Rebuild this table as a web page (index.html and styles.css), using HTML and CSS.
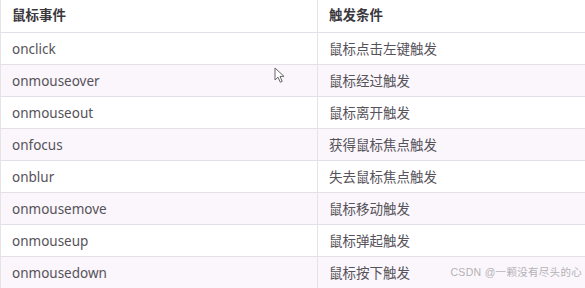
FILE: index.html
```html
<!DOCTYPE html>
<html lang="zh">
<head>
<meta charset="utf-8">
<link rel="stylesheet" href="styles.css">
</head>
<body>
<div class="page">
  <table class="events">
    <thead>
      <tr><th>鼠标事件</th><th>触发条件</th></tr>
    </thead>
    <tbody>
      <tr><td>onclick</td><td>鼠标点击左键触发</td></tr>
      <tr><td>onmouseover</td><td>鼠标经过触发</td></tr>
      <tr><td>onmouseout</td><td>鼠标离开触发</td></tr>
      <tr><td>onfocus</td><td>获得鼠标焦点触发</td></tr>
      <tr><td>onblur</td><td>失去鼠标焦点触发</td></tr>
      <tr><td>onmousemove</td><td>鼠标移动触发</td></tr>
      <tr><td>onmouseup</td><td>鼠标弹起触发</td></tr>
      <tr><td>onmousedown</td><td>鼠标按下触发</td></tr>
    </tbody>
  </table>
  <svg class="cursor" width="12" height="17" viewBox="0 0 12 17">
    <path d="M1 1 L1 13 L4 10.2 L6.3 15.2 L8.2 14.3 L6 9.4 L10 9.4 Z" fill="#fff" stroke="#666" stroke-width="1" stroke-linejoin="round"/>
  </svg>
  <div class="watermark">CSDN @一颗没有尽头的心</div>
</div>
</body>
</html>
```
FILE: styles.css
```css
html, body {
  margin: 0;
  padding: 0;
  background: #fff;
}
.page {
  position: relative;
  width: 585px;
  height: 288px;
  overflow: hidden;
}
.events {
  border-collapse: collapse;
  width: 620px;
  table-layout: fixed;
  font-family: "Noto Sans", "Noto Sans CJK SC", sans-serif;
  font-size: 13.5px;
  color: #56525a;
  border-left: 1px solid #e6e2ea;
}
.events th,
.events td {
  padding: 0 0 0 11px;
  text-align: left;
  border-bottom: 1px solid #e4dfe8;
  line-height: 20px;
}
.events th:first-child,
.events td:first-child {
  width: 305px;
  border-right: 1px solid #e6e2ea;
}
.events th {
  height: 30px;
  font-weight: bold;
  color: #3a373d;
  padding-bottom: 2px;
}
.events td {
  height: 31px;
}
.events tbody tr:nth-child(even) {
  background: #faf6fb;
}
.cursor {
  position: absolute;
  left: 274px;
  top: 67px;
}
.watermark {
  position: absolute;
  right: 3px;
  top: 264px;
  font-family: "Liberation Sans", "Noto Sans CJK SC", sans-serif;
  font-size: 10.5px;
  letter-spacing: 0.3px;
  color: #b4b2b6;
  white-space: nowrap;
}
```
